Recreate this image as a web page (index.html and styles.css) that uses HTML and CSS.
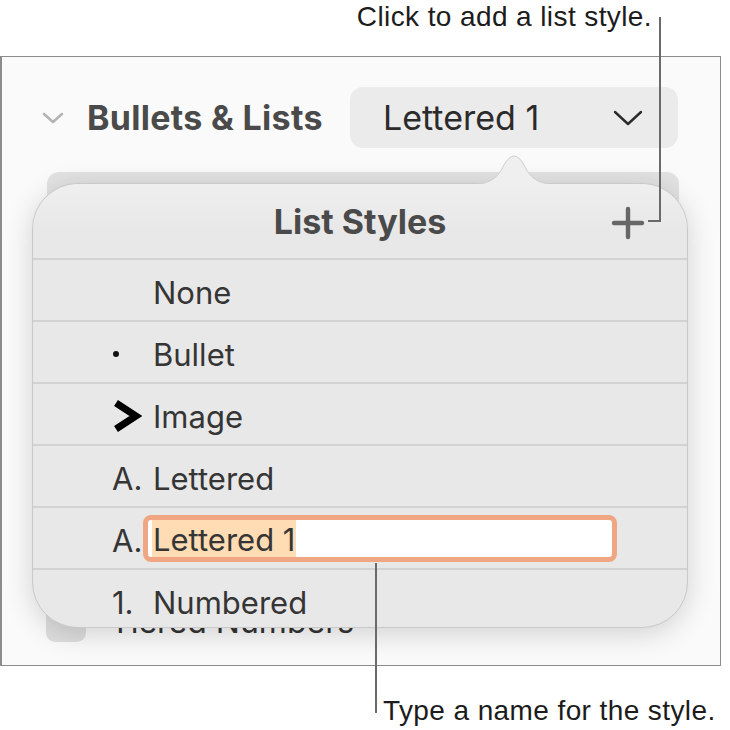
FILE: index.html
```html
<!DOCTYPE html>
<html lang="en">
<head>
    <meta charset="UTF-8">
    <meta name="viewport" content="width=device-width, initial-scale=1.0">
    <title>List Styles</title>
    <link rel="stylesheet" href="styles.css">
</head>
<body>
    <div class="figure">
        <p class="callout callout-top">Click to add a list style.</p>

        <div class="panel">
            <!-- Section header -->
            <div class="panel-header">
                <svg class="disclosure" width="22" height="12" viewBox="0 0 22 12">
                    <path d="M2 2 L11 10 L20 2" fill="none" stroke="#b4b4b4" stroke-width="2.6" stroke-linecap="round" stroke-linejoin="round"/>
                </svg>
                <h2 class="panel-title">Bullets &amp; Lists</h2>
                <div class="select">
                    <span>Lettered 1</span>
                    <svg width="30" height="16" viewBox="0 0 30 16">
                        <path d="M2 2 L15 14 L28 2" fill="none" stroke="#2b2b2b" stroke-width="2.4" stroke-linecap="round" stroke-linejoin="round"/>
                    </svg>
                </div>
            </div>

            <div class="list-box"></div>

            <div class="option-row">
                <span class="checkbox"></span>
                <span class="option-label">Tiered Numbers</span>
            </div>

            <!-- List Styles popover -->
            <div class="popover">
                <svg class="popover-arrow" width="96" height="32" viewBox="0 0 96 32">
                    <path d="M0 31.5 C22 31.5 30 28 38 12 Q48 -6 58 12 C66 28 74 31.5 96 31.5" fill="#efefef" stroke="#cdcdcd" stroke-width="1"/>
                </svg>
                <div class="popover-header">
                    <h3>List Styles</h3>
                    <svg class="add-button" width="34" height="34" viewBox="0 0 34 34">
                        <path d="M17 3 V31 M3 17 H31" stroke="#666" stroke-width="4.4" stroke-linecap="round"/>
                    </svg>
                </div>
                <div class="style-row">
                    <span class="marker"></span>
                    <span>None</span>
                </div>
                <div class="style-row">
                    <span class="marker"><span class="dot"></span></span>
                    <span>Bullet</span>
                </div>
                <div class="style-row">
                    <span class="marker">
                        <svg width="30" height="32" viewBox="0 0 30 32">
                            <path d="M4 3 L24 16 L4 29" fill="none" stroke="#000" stroke-width="7" stroke-linejoin="miter"/>
                        </svg>
                    </span>
                    <span>Image</span>
                </div>
                <div class="style-row">
                    <span class="marker">A.</span>
                    <span>Lettered</span>
                </div>
                <div class="style-row">
                    <span class="marker marker-narrow">A.</span>
                    <div class="name-field"><span class="selected">Lettered 1</span></div>
                </div>
                <div class="style-row">
                    <span class="marker">1.</span>
                    <span>Numbered</span>
                </div>
            </div>
        </div>

        <p class="callout callout-bottom">Type a name for the style.</p>

        <div class="leader leader-top-v"></div>
        <div class="leader leader-top-h"></div>
        <div class="leader leader-bottom-v"></div>
    </div>
</body>
</html>
```

FILE: styles.css
```css
body {
    margin: 0;
    background: #fff;
    font-family: Inter, "Noto Sans", sans-serif;
}
.figure {
    position: relative;
    width: 730px;
    height: 730px;
    overflow: hidden;
}
.callout {
    margin: 0;
    font-family: "Liberation Sans", Arial, sans-serif;
    font-size: 28px;
    letter-spacing: 0.4px;
    color: #1c1c1c;
    white-space: nowrap;
}
.callout-top {
    height: 56px;
    line-height: 34px;
    text-align: right;
    padding-right: 78px;
}
.callout-bottom {
    padding-left: 383px;
    padding-top: 28px;
    line-height: 34px;
}
.panel {
    position: relative;
    width: 721px;
    height: 610px;
    border: 1px solid #8c8c8c;
    border-left-width: 2px;
    background: #fafafa;
    padding: 0 42px 0 40px;
    box-sizing: border-box;
}
.panel-header {
    display: flex;
    align-items: center;
    padding-top: 30px;
}
.disclosure {
    margin-right: 23px;
}
.panel-title {
    margin: 0;
    font-size: 34px;
    font-weight: 700;
    color: #4a4a4a;
    letter-spacing: 0.3px;
}
.select {
    margin-left: auto;
    width: 328px;
    height: 61px;
    border-radius: 13px;
    background: #ebebeb;
    display: flex;
    align-items: center;
    justify-content: space-between;
    padding: 0 35px 0 33px;
    box-sizing: border-box;
    font-size: 34px;
    color: #2b2b2b;
}
.list-box {
    margin: 24px -1px 0 5px;
    height: 420px;
    border-radius: 12px;
    background: #e2e2e2;
}
.option-row {
    display: flex;
    align-items: center;
    gap: 24px;
    margin-top: 8px;
    margin-left: 4px;
}
.checkbox {
    width: 40px;
    height: 42px;
    border-radius: 9px;
    background: #dedede;
}
.option-label {
    font-size: 32px;
    color: #333;
}
.popover {
    position: absolute;
    left: 30px;
    top: 126px;
    width: 656px;
    height: 445px;
    box-sizing: border-box;
    border: 1px solid #c9c9c9;
    border-radius: 46px;
    background: #e8e8e8;
    box-shadow: 0 6px 28px rgba(0, 0, 0, 0.16);
}
.popover-arrow {
    position: absolute;
    left: 433px;
    top: -31px;
}
.popover-header {
    position: relative;
    height: 74px;
    display: flex;
    align-items: center;
    justify-content: center;
    border-radius: 46px 46px 0 0;
    background: linear-gradient(#efefef, #e8e8e8 60%);
}
.popover-header h3 {
    margin: 0;
    font-size: 34px;
    font-weight: 700;
    color: #4a4a4a;
}
.add-button {
    position: absolute;
    right: 42px;
    top: 22px;
}
.style-row {
    height: 62px;
    box-sizing: border-box;
    border-top: 2px solid #d3d3d3;
    display: flex;
    align-items: center;
    padding-left: 79px;
    padding-top: 4px;
    font-size: 31px;
    color: #353535;
}
.marker {
    width: 41px;
    display: flex;
    align-items: center;
    color: #353535;
}
.marker-narrow {
    width: 31px;
}
.dot {
    width: 6px;
    height: 6px;
    margin-left: 1px;
    border-radius: 50%;
    background: #111;
}
.name-field {
    width: 474px;
    height: 47px;
    margin-top: -4px;
    box-sizing: border-box;
    border: 5px solid #f0a682;
    border-radius: 8px;
    background: #fff;
    padding-left: 4px;
    display: flex;
    align-items: stretch;
}
.selected {
    display: flex;
    align-items: center;
    padding: 2px 1px 0;
    background: #ffdcb4;
}
.leader {
    position: absolute;
    background: #6a6a6a;
}
.leader-top-v {
    left: 659px;
    top: 17px;
    width: 2px;
    height: 205px;
}
.leader-top-h {
    left: 648px;
    top: 220px;
    width: 12px;
    height: 2px;
}
.leader-bottom-v {
    left: 375px;
    top: 563px;
    width: 2px;
    height: 150px;
}
```
